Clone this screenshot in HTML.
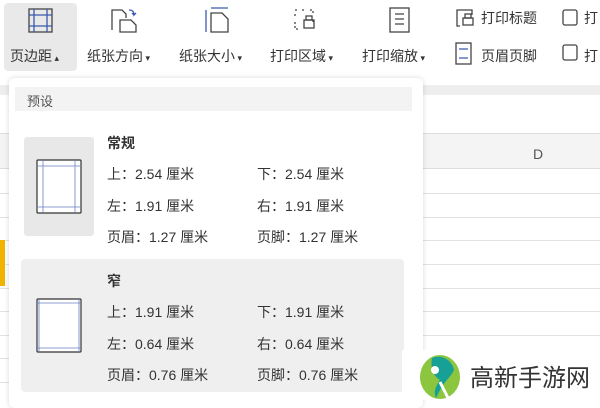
<!DOCTYPE html>
<html><head><meta charset="utf-8"><style>
*{margin:0;padding:0;box-sizing:border-box}
body{width:600px;height:400px;overflow:hidden;background:#fff;font-family:"Liberation Sans","Noto Sans CJK SC",sans-serif;color:#333;position:relative}
.a{position:absolute;white-space:nowrap}
.lbl{font-size:14px;color:#333}
.t{font-size:14px;color:#333}
.b{font-weight:bold}
.hl{position:absolute;left:0;width:600px;height:1px;background:#e2e2e2}
</style></head><body>
<div class="a" style="left:4px;top:3px;width:73px;height:68px;background:#e9e9e9;border-radius:4px"></div>
<svg class="a" style="left:0;top:0" width="600" height="70" fill="none" stroke="#444" stroke-width="1.3">
<rect x="29" y="9" width="23" height="23"/><line x1="34" y1="9" x2="34" y2="32" stroke="#3a5ab0"/><line x1="47" y1="9" x2="47" y2="32" stroke="#3a5ab0"/><line x1="29" y1="15" x2="52" y2="15" stroke="#3a5ab0"/><line x1="29" y1="26" x2="52" y2="26" stroke="#3a5ab0"/>
<path d="M112 30V10h10l4 4v4M120 32V20h11l5 5v7z"/><path d="M129 10c4 0 5 2 5 5l2-2M134 15l-2-2" stroke="#3a5ab0"/>
<line x1="206" y1="10" x2="206" y2="32" stroke="#3a5ab0"/><line x1="211" y1="8" x2="228" y2="8" stroke="#3a5ab0"/><path d="M211 32V13h11l6 6v13z"/>
<path d="M295 10h3M302 10h4M310 10h3v4M295 14v4M295 22v4v3h3M313 20v2" stroke-dasharray="2 2"/><rect x="304" y="20" width="10" height="8"/><rect x="306" y="16" width="6" height="4"/>
<rect x="390" y="8" width="19" height="24"/><path d="M395 14h9M395 19h9M395 24h9"/>
<path d="M460 26h-3V10h15v5"/><rect x="463" y="18" width="10" height="7"/><rect x="465" y="14" width="6" height="4"/>
<rect x="456" y="43" width="15" height="21"/><path d="M459 49h9M459 58h9" stroke="#3a5ab0"/>
<rect x="563" y="10" width="14" height="15" rx="2"/><rect x="563" y="45" width="14" height="15" rx="2"/>
</svg>
<div class="a lbl" style="left:10px;top:46px">页边距<span style="font-size:9px"> ▴</span></div>
<div class="a lbl" style="left:87px;top:46px">纸张方向<span style="font-size:9px"> ▾</span></div>
<div class="a lbl" style="left:179px;top:46px">纸张大小<span style="font-size:9px"> ▾</span></div>
<div class="a lbl" style="left:270px;top:46px">打印区域<span style="font-size:9px"> ▾</span></div>
<div class="a lbl" style="left:362px;top:46px">打印缩放<span style="font-size:9px"> ▾</span></div>
<div class="a lbl" style="left:481px;top:8px">打印标题</div>
<div class="a lbl" style="left:481px;top:46px">页眉页脚</div>
<div class="a lbl" style="left:584px;top:8px">打</div>
<div class="a lbl" style="left:584px;top:46px">打</div>
<div class="a" style="left:0;top:85px;width:600px;height:10px;background:#eee"></div>
<div class="a" style="left:0;top:133px;width:600px;height:36px;background:#f4f4f4;border-top:1px solid #ddd;border-bottom:1px solid #ddd"></div>
<div class="a" style="left:533px;top:146px;font-size:14px;color:#555">D</div>
<div class="hl" style="top:193px"></div><div class="hl" style="top:217px"></div><div class="hl" style="top:240px"></div><div class="hl" style="top:264px"></div><div class="hl" style="top:288px"></div><div class="hl" style="top:311px"></div><div class="hl" style="top:335px"></div><div class="hl" style="top:358px"></div><div class="hl" style="top:382px"></div>
<div class="a" style="left:0;top:240px;width:5px;height:46px;background:#f0b400"></div>
<div class="a" style="left:9px;top:78px;width:414px;height:330px;background:#fff;border-radius:6px;box-shadow:0 0 6px rgba(0,0,0,.15)"></div>
<div class="a" style="left:15px;top:87px;width:397px;height:24px;background:#f3f3f3"></div>
<div class="a" style="left:27px;top:91px;font-size:13px;color:#555">预设</div>
<div class="a" style="left:24px;top:137px;width:70px;height:99px;background:#e8e8e8;border-radius:3px"></div>
<div class="a" style="left:21px;top:259px;width:383px;height:133px;background:#efefef;border-radius:4px"></div>
<svg class="a" style="left:0;top:0" width="420" height="400" fill="#fff" stroke="#333" stroke-width="1.2">
<rect x="37" y="160" width="44" height="53" rx="1"/><path d="M43 160v53M75 160v53M37 166h44M37 207h44" stroke="#6a80c0" stroke-width=".8"/>
<rect x="37" y="299" width="44" height="53" rx="1"/><path d="M39 299v53M79 299v53M37 303h44M37 348h44" stroke="#6a80c0" stroke-width=".8"/>
</svg>
<div class="a t b" style="left:107px;top:133px">常规</div>
<div class="a t" style="left:107px;top:164px">上：2.54 厘米</div><div class="a t" style="left:257px;top:164px">下：2.54 厘米</div>
<div class="a t" style="left:107px;top:196px">左：1.91 厘米</div><div class="a t" style="left:257px;top:196px">右：1.91 厘米</div>
<div class="a t" style="left:107px;top:227px">页眉：1.27 厘米</div><div class="a t" style="left:257px;top:227px">页脚：1.27 厘米</div>
<div class="a t b" style="left:107px;top:271px">窄</div>
<div class="a t" style="left:107px;top:302px">上：1.91 厘米</div><div class="a t" style="left:257px;top:302px">下：1.91 厘米</div>
<div class="a t" style="left:107px;top:334px">左：0.64 厘米</div><div class="a t" style="left:257px;top:334px">右：0.64 厘米</div>
<div class="a t" style="left:107px;top:365px">页眉：0.76 厘米</div><div class="a t" style="left:257px;top:365px">页脚：0.76 厘米</div>
<div class="a" style="left:402px;top:350px;width:198px;height:50px;background:#fff"></div>
<svg class="a" style="left:418px;top:352px" width="48" height="48"><ellipse cx="22" cy="25" rx="20" ry="22" fill="#8cc63f"/><path d="M14 6c10-4 20 2 22 12-4 8-10 12-14 20l-4 8c-3-6 0-12 4-18-6-4-10-10-8-22z" fill="#17a096"/><circle cx="17" cy="18" r="4" fill="#fff"/><path d="M22 30l8 16" stroke="#fff" stroke-width="3"/></svg>
<div class="a" style="left:470px;top:358px;font-size:24px;color:#333">高新手游网</div>
</body></html>
